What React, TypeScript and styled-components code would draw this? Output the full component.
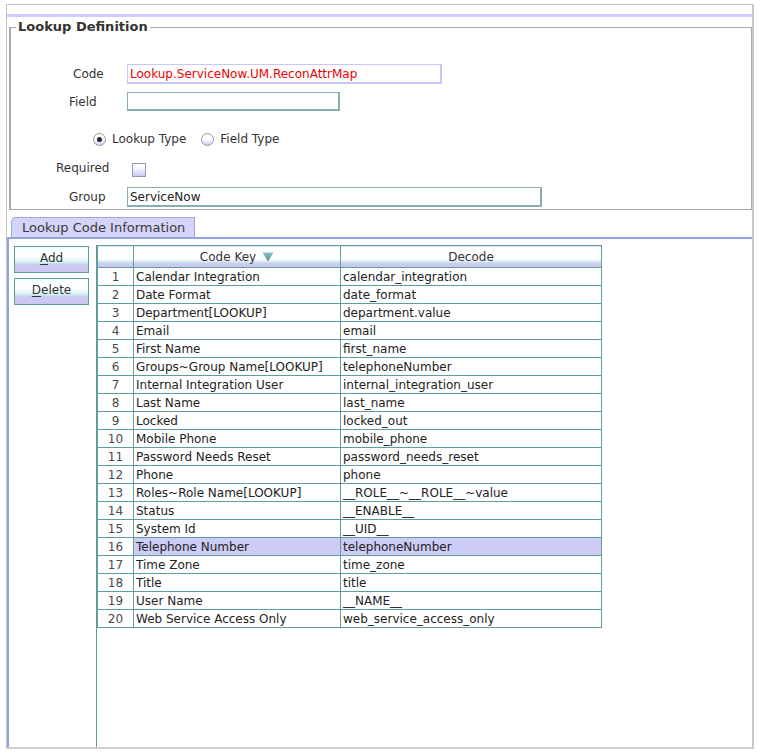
import styled, { createGlobalStyle } from "styled-components";

const GlobalStyle = createGlobalStyle`
  html, body {
    margin: 0;
    padding: 0;
    background: #ffffff;
  }
  body {
    font-family: "DejaVu Sans", "Liberation Sans", sans-serif;
    font-size: 12px;
    color: #333333;
  }
`;

const TEAL = "#5f9e9c";
const LAVENDER = "#ccccf6";

interface LookupRow {
  key: string;
  decode: string;
}

const rows: LookupRow[] = [
  { key: "Calendar Integration", decode: "calendar_integration" },
  { key: "Date Format", decode: "date_format" },
  { key: "Department[LOOKUP]", decode: "department.value" },
  { key: "Email", decode: "email" },
  { key: "First Name", decode: "first_name" },
  { key: "Groups~Group Name[LOOKUP]", decode: "telephoneNumber" },
  { key: "Internal Integration User", decode: "internal_integration_user" },
  { key: "Last Name", decode: "last_name" },
  { key: "Locked", decode: "locked_out" },
  { key: "Mobile Phone", decode: "mobile_phone" },
  { key: "Password Needs Reset", decode: "password_needs_reset" },
  { key: "Phone", decode: "phone" },
  { key: "Roles~Role Name[LOOKUP]", decode: "__ROLE__~__ROLE__~value" },
  { key: "Status", decode: "__ENABLE__" },
  { key: "System Id", decode: "__UID__" },
  { key: "Telephone Number", decode: "telephoneNumber" },
  { key: "Time Zone", decode: "time_zone" },
  { key: "Title", decode: "title" },
  { key: "User Name", decode: "__NAME__" },
  { key: "Web Service Access Only", decode: "web_service_access_only" },
];

const SELECTED = 15;

const App = () => {
  return (
    <>
      <GlobalStyle />
      <FrameStyle>
        <TopStripStyle>
          <StripBarStyle />
        </TopStripStyle>

        <FieldsetStyle>
          <LegendStyle>Lookup Definition</LegendStyle>
          <FormRowStyle $top={29} $height={20}>
            <LabelStyle $left={62}>Code</LabelStyle>
            <InputStyle $width={315} $border="#c8c8f8" $color="#ee0000">
              Lookup.ServiceNow.UM.ReconAttrMap
            </InputStyle>
          </FormRowStyle>
          <FormRowStyle $top={8} $height={19}>
            <LabelStyle $left={58}>Field</LabelStyle>
            <InputStyle $width={213} $border="#86b0ae" />
          </FormRowStyle>
          <RadioRowStyle>
            <RadioStyle $checked />
            <RadioLabelStyle>Lookup Type</RadioLabelStyle>
            <RadioStyle />
            <RadioLabelStyle>Field Type</RadioLabelStyle>
          </RadioRowStyle>
          <FormRowStyle $top={12} $height={18}>
            <LabelStyle $left={45}>Required</LabelStyle>
            <CheckboxStyle />
          </FormRowStyle>
          <FormRowStyle $top={10} $height={20}>
            <LabelStyle $left={58}>Group</LabelStyle>
            <InputStyle $width={415} $border="#86b0ae">ServiceNow</InputStyle>
          </FormRowStyle>
        </FieldsetStyle>

        <TabStripStyle>
          <TabStyle>Lookup Code Information</TabStyle>
        </TabStripStyle>

        <TabBodyStyle>
          <ButtonColumnStyle>
            <ButtonStyle><u>A</u>dd</ButtonStyle>
            <ButtonStyle><u>D</u>elete</ButtonStyle>
          </ButtonColumnStyle>

          <ScrollPaneStyle>
            <TableStyle>
              <colgroup>
                <col style={{ width: 36 }} />
                <col style={{ width: 207 }} />
                <col style={{ width: 261 }} />
              </colgroup>
              <thead>
                <tr>
                  <HeadCellStyle />
                  <HeadCellStyle>
                    Code Key
                    <SortIcon width="12" height="10" viewBox="0 0 12 10">
                      <defs>
                        <linearGradient id="sortFill" x1="0" y1="0" x2="0" y2="1">
                          <stop offset="0" stopColor="#8cc2c0" />
                          <stop offset="1" stopColor="#4f8e8c" />
                        </linearGradient>
                      </defs>
                      <polygon points="0.5,0.5 11.5,0.5 6,9.5" fill="url(#sortFill)" />
                    </SortIcon>
                  </HeadCellStyle>
                  <HeadCellStyle>Decode</HeadCellStyle>
                </tr>
              </thead>
              <tbody>
                {rows.map((row, i) => (
                  <tr key={row.key}>
                    <NumCellStyle>{i + 1}</NumCellStyle>
                    <CellStyle $selected={i === SELECTED}>{row.key}</CellStyle>
                    <CellStyle $selected={i === SELECTED}>{row.decode}</CellStyle>
                  </tr>
                ))}
              </tbody>
            </TableStyle>
          </ScrollPaneStyle>
        </TabBodyStyle>
      </FrameStyle>
    </>
  );
};

const FrameStyle = styled.div`
  margin: 4px 0 0 6px;
  width: 748px;
  height: 745px;
  box-sizing: border-box;
  border: 1px solid #c4c4c4;
  border-right: 2px solid #c8c8c8;
  border-bottom: 2px solid #cfcfcf;
  display: flex;
  flex-direction: column;
`;

const TopStripStyle = styled.div`
  height: 14px;
  padding-top: 9px;
  box-sizing: border-box;
`;

const StripBarStyle = styled.div`
  height: 3px;
  background: #ccccff;
`;

const FieldsetStyle = styled.fieldset`
  margin: 0 0 0 2px;
  padding: 0 0 2px 0;
  min-width: 0;
  border: 1px solid #a9a9a9;
  border-left-width: 2px;
`;

const LegendStyle = styled.legend`
  margin-left: 5px;
  padding: 0 2px;
  font-size: 13px;
  line-height: 16px;
  font-weight: bold;
  color: #333333;
`;

const FormRowStyle = styled.div<{ $top: number; $height: number }>`
  display: flex;
  align-items: center;
  margin-top: ${({ $top }) => $top}px;
  height: ${({ $height }) => $height}px;
`;

const LabelStyle = styled.div<{ $left: number }>`
  width: 116px;
  box-sizing: border-box;
  padding-left: ${({ $left }) => $left}px;
  color: #333333;
  white-space: nowrap;
`;

const InputStyle = styled.div<{ $width: number; $border: string; $color?: string }>`
  width: ${({ $width }) => $width}px;
  height: 100%;
  box-sizing: border-box;
  border: 1px solid ${({ $border }) => $border};
  border-right-width: 2px;
  border-bottom-width: 2px;
  padding-left: 2px;
  display: flex;
  align-items: center;
  color: ${({ $color }) => $color || "#222222"};
  background: #ffffff;
  white-space: nowrap;
`;

const RadioRowStyle = styled.div`
  display: flex;
  align-items: center;
  margin-top: 20px;
  height: 16px;
  padding-left: 82px;
`;

const RadioStyle = styled.span<{ $checked?: boolean }>`
  position: relative;
  width: 13px;
  height: 13px;
  box-sizing: border-box;
  border-radius: 50%;
  border: 1px solid #8a9aa8;
  background: linear-gradient(#ffffff 0%, #ffffff 45%, #d0d0f2 100%);

  &::after {
    content: "";
    display: ${({ $checked }) => ($checked ? "block" : "none")};
    position: absolute;
    left: 3px;
    top: 3px;
    width: 5px;
    height: 5px;
    border-radius: 50%;
    background: #2a2a2a;
  }
`;

const RadioLabelStyle = styled.span`
  margin: 0 15px 0 6px;
  color: #333333;
`;

const CheckboxStyle = styled.span`
  margin: 3px 0 0 5px;
  width: 14px;
  height: 14px;
  box-sizing: border-box;
  border: 1px solid #8f9fb0;
  background: linear-gradient(#ffffff 0%, #f4f4ff 40%, #c8c8f0 100%);
`;

const TabStripStyle = styled.div`
  display: flex;
  padding: 7px 0 0 4px;
`;

const TabStyle = styled.div`
  width: 184px;
  height: 20px;
  box-sizing: border-box;
  padding-left: 10px;
  border: 1px solid #9aa8d4;
  border-bottom: none;
  border-top-left-radius: 5px;
  background: #d4d4f8;
  font-size: 13px;
  line-height: 19px;
  color: #3a3a3a;
`;

const TabBodyStyle = styled.div`
  flex: 1;
  display: flex;
  border-top: 2px solid #8ea6dc;
  border-left: 2px solid #8ea6dc;
  min-height: 0;
`;

const ButtonColumnStyle = styled.div`
  width: 87px;
  box-sizing: border-box;
  padding: 7px 0 0 5px;
  display: flex;
  flex-direction: column;
  gap: 5px;
`;

const ButtonStyle = styled.div`
  width: 75px;
  height: 27px;
  box-sizing: border-box;
  border: 1px solid ${TEAL};
  background: linear-gradient(
    #f4ffff 0%,
    #ffffff 35%,
    #e2f4f4 55%,
    #c8eeee 64%,
    #ccccf4 68%,
    #c8c8f2 100%
  );
  text-align: center;
  line-height: 22px;
  color: #333333;
  cursor: pointer;

  u {
    text-decoration-thickness: 1px;
    text-underline-offset: 2px;
  }
`;

const ScrollPaneStyle = styled.div`
  flex: 1;
  margin-top: 6px;
  border-left: 1px solid ${TEAL};
  overflow: hidden;
`;

const TableStyle = styled.table`
  border-collapse: collapse;
  table-layout: fixed;
  width: 504px;
  border: 1px solid ${TEAL};
`;

const HeadCellStyle = styled.th`
  height: 22px;
  padding: 0;
  box-sizing: border-box;
  border: 1px solid ${TEAL};
  background: linear-gradient(
    #ffffff 0%,
    #ffffff 55%,
    #eef8f8 65%,
    #d6eeee 72%,
    #cfcff4 78%,
    #c6c6f0 100%
  );
  font-weight: normal;
  color: #333333;
  text-align: center;
  white-space: nowrap;
`;

const SortIcon = styled.svg`
  margin-left: 6px;
  vertical-align: -1px;
`;

const NumCellStyle = styled.td`
  height: 17px;
  padding: 0;
  border: 1px solid ${TEAL};
  text-align: center;
  color: #4a4a4a;
  font-size: 12px;
`;

const CellStyle = styled.td<{ $selected?: boolean }>`
  height: 17px;
  padding: 0 0 0 2px;
  border: 1px solid ${TEAL};
  background: ${({ $selected }) => ($selected ? LAVENDER : "#ffffff")};
  color: #222222;
  white-space: nowrap;
  overflow: hidden;
`;

export default App;
